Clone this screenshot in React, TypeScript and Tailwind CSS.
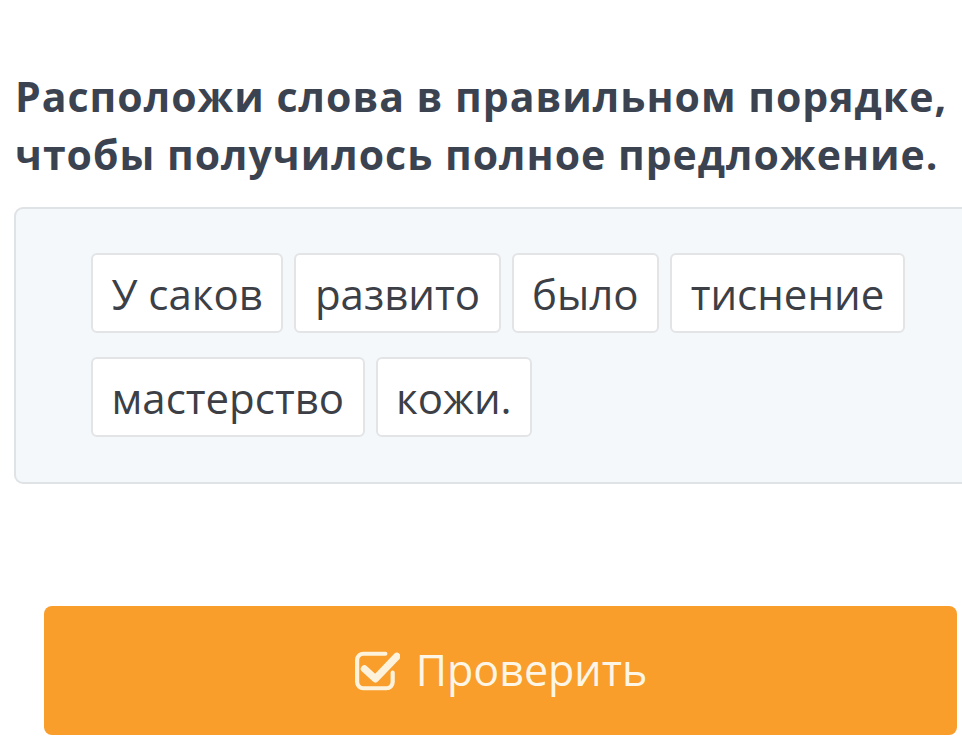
const words = [
  ['У саков', 'развито', 'было', 'тиснение'],
  ['мастерство', 'кожи.'],
];

function CheckSquareIcon() {
  return (
    <svg width="46" height="42" viewBox="0 0 44 40" fill="none">
      <path
        d="M30 3.5H9a6 6 0 0 0-6 6v21a6 6 0 0 0 6 6h22a6 6 0 0 0 6-6v-9"
        stroke="#fdf3dc"
        strokeWidth="4"
        strokeLinecap="round"
      />
      <path
        d="M10 18l10.5 9.5L41 6"
        stroke="#fdf3dc"
        strokeWidth="7"
        strokeLinecap="round"
        strokeLinejoin="round"
      />
    </svg>
  );
}

export default function App() {
  return (
    <div className="min-h-screen overflow-hidden bg-white font-['Open_Sans',sans-serif]">
      <h1 className="pl-[15px] pt-[67px] text-[41px] font-bold leading-[58px] tracking-[1px] text-[#3c4350]">
        Расположи слова в правильном порядке,
        <br />
        чтобы получилось полное предложение.
      </h1>

      <div className="ml-[14px] mt-[24px] w-[980px] rounded-[9px] border-2 border-[#dfe3e6] bg-[#f4f8fb] pb-[45px] pl-[75px] pt-[44px]">
        <div className="flex flex-col gap-[24px]">
          {words.map((row, i) => (
            <div key={i} className="flex gap-[11px]">
              {row.map((w) => (
                <div
                  key={w}
                  className="flex h-[80px] items-center rounded-[6px] border-2 border-[#e2e4e6] bg-white px-[18.5px] text-[42px] text-[#3c4046]"
                >
                  {w}
                </div>
              ))}
            </div>
          ))}
        </div>
      </div>

      <div className="ml-[44px] mt-[122px] flex h-[129px] w-[913px] items-center justify-center gap-[16px] rounded-[8px] bg-[#f99d2b]">
        <CheckSquareIcon />
        <span className="text-[43px] text-[#fdf6e6]">Проверить</span>
      </div>
    </div>
  );
}
